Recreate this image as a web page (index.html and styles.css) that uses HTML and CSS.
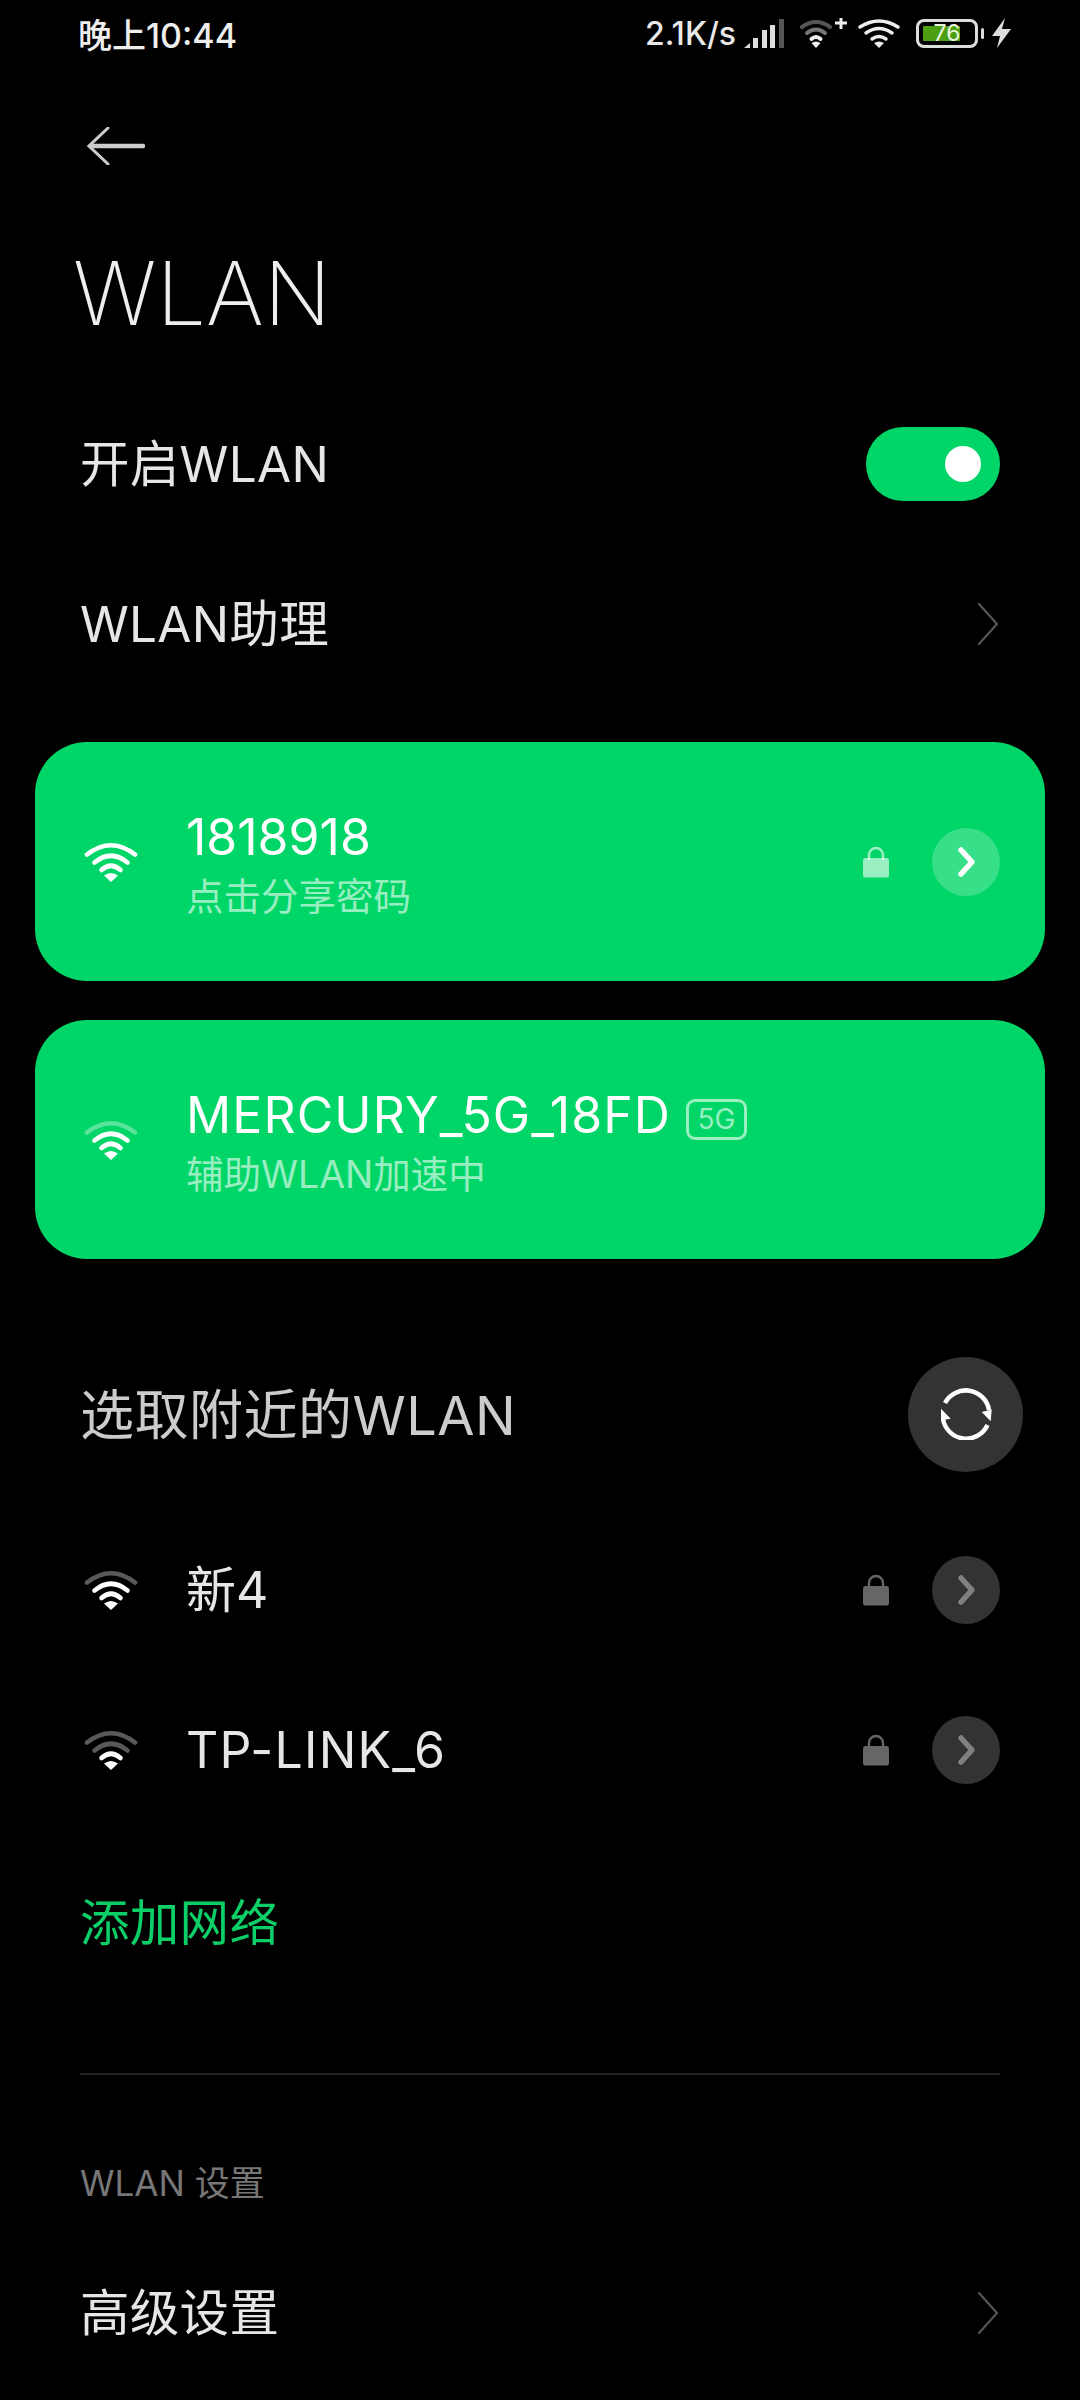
FILE: index.html
```html
<!DOCTYPE html>
<html lang="zh-CN">
<head>
  <meta charset="UTF-8" />
  <meta name="viewport" content="width=device-width, initial-scale=1.0"/>
  <title>WLAN</title>
  <link rel="stylesheet" href="styles.css">
</head>
<body>
  <!-- Icones reutilizados -->
  <svg class="defs" aria-hidden="true">
    <symbol id="arc-outer" viewBox="0 0 54 40"><path d="M3 12.5Q27 -6 51 12.5" fill="none" stroke="currentColor" stroke-width="4.6" stroke-linecap="round"/></symbol>
    <symbol id="arc-middle" viewBox="0 0 54 40"><path d="M10.5 20.5Q27 7 43.500 20.500" fill="none" stroke="currentColor" stroke-width="4.6" stroke-linecap="round"/></symbol>
    <symbol id="arc-inner" viewBox="0 0 54 40"><path d="M17.500 28Q27 19.500 36.500 28" fill="none" stroke="currentColor" stroke-width="4.6" stroke-linecap="round"/></symbol>
    <symbol id="wifi-dot" viewBox="0 0 54 40"><path d="M20 33.500Q27 28.500 34 33.500L27 40Z" fill="currentColor"/></symbol>
    <symbol id="lock" viewBox="0 0 28 32"><path d="M7 14V9a7 7 0 0 1 14 0v5" fill="none" stroke="currentColor" stroke-width="2.400"/><rect x="1" y="12" width="26" height="19.500" rx="2.500" fill="currentColor"/></symbol>
    <symbol id="go" viewBox="0 0 68 68"><path d="M29 22L40 34L29 46" fill="none" stroke="currentColor" stroke-width="5.500" stroke-linecap="round" stroke-linejoin="round"/></symbol>
    <symbol id="more" viewBox="0 0 24 44"><path d="M3 2L21 22L3 42" fill="none" stroke="currentColor" stroke-width="2.200" stroke-linecap="round"/></symbol>
  </svg>

  <div class="status-bar">
    <span class="status-time">晚上10:44</span>
    <div class="status-icons">
      <span class="net-speed">2.1K/s</span>
      <svg class="ic-signal" viewBox="0 0 40 29">
        <path d="M0 29L6 24V29Z" fill="#ddd"/>
        <rect x="9" y="19" width="5" height="10" fill="#ddd"/>
        <rect x="18" y="11" width="5" height="18" fill="#ddd"/>
        <rect x="26" y="6" width="5" height="23" fill="#ddd"/>
        <rect x="35" y="0" width="5" height="29" fill="#555"/>
      </svg>
      <svg class="ic-wifi-plus" viewBox="0 0 47 30">
        <g fill="none" stroke-width="4" stroke-linecap="round">
          <path d="M2 9Q16 -1 30 9" stroke="#555"/>
          <path d="M7 15Q16 8 25 15" stroke="#777"/>
          <path d="M11.500 21Q16 17 20.500 21" stroke="#eee"/>
        </g>
        <path d="M11.500 25Q16 22 20.500 25L16 30Z" fill="#eee"/>
        <path d="M35 5H47M41 0V11" stroke="#eee" stroke-width="3" fill="none"/>
      </svg>
      <svg class="ic-wifi-small" viewBox="0 0 42 30">
        <g fill="none" stroke="#eee" stroke-width="3.400" stroke-linecap="round">
          <path d="M2 9Q21 -3 40 9"/>
          <path d="M8 15Q21 6 34 15"/>
          <path d="M14 21Q21 16 28 21"/>
        </g>
        <path d="M16 25Q21 22 26 25L21 30Z" fill="#eee"/>
      </svg>
      <div class="battery">
        <div class="battery-body">
          <div class="battery-fill"></div>
          <span class="battery-num">76</span>
        </div>
        <span class="battery-nub"></span>
      </div>
      <svg class="ic-bolt" viewBox="0 0 19 30"><path d="M13 0L0 18H8L5 30L19 11H10Z" fill="#ddd"/></svg>
    </div>
  </div>

  <div class="top-bar">
    <svg class="ic-back" viewBox="0 0 58 38">
      <path d="M21 1L2 19L21 37" fill="none" stroke="#ccc" stroke-width="3" stroke-linecap="round"/>
      <path d="M5 19H56" fill="none" stroke="#ccc" stroke-width="4.500" stroke-linecap="round"/>
    </svg>
  </div>

  <h1 class="page-title">WLAN</h1>

  <div class="row">
    <span class="row-label">开启WLAN</span>
    <div class="toggle"><span class="toggle-knob"></span></div>
  </div>
  <div class="row">
    <span class="row-label">WLAN助理</span>
    <svg class="ic-more"><use href="#more"/></svg>
  </div>

  <div class="cards">
    <div class="net net-card">
      <svg class="ic-wifi">
        <use href="#arc-outer"/><use href="#arc-middle"/><use href="#arc-inner"/><use href="#wifi-dot"/>
      </svg>
      <div class="net-text">
        <div class="net-name">1818918</div>
        <div class="net-sub">点击分享密码</div>
      </div>
      <svg class="ic-lock"><use href="#lock"/></svg>
      <svg class="ic-go"><use href="#go"/></svg>
    </div>
    <div class="net net-card">
      <svg class="ic-wifi">
        <use class="arc-dim" href="#arc-outer"/><use href="#arc-middle"/><use href="#arc-inner"/><use href="#wifi-dot"/>
      </svg>
      <div class="net-text">
        <div class="net-name name-wide">MERCURY_5G_18FD<span class="badge-5g">5G</span></div>
        <div class="net-sub">辅助WLAN加速中</div>
      </div>
    </div>
  </div>

  <div class="row section-head">
    <span class="section-label">选取附近的WLAN</span>
    <div class="refresh">
      <svg class="ic-refresh" viewBox="0 0 52 52">
        <g fill="none" stroke="#fff" stroke-width="4.500">
          <path d="M5 15A23.500 23.500 0 0 1 49 22"/>
          <path d="M47.500 37A23.500 23.500 0 0 1 3 31"/>
        </g>
        <path d="M1 20.700L10.700 30.700L1 32.300Z" fill="#fff"/>
        <path d="M41.700 24L51.700 21.600L50.700 33.300Z" fill="#fff"/>
      </svg>
    </div>
  </div>

  <div class="net net-row">
    <svg class="ic-wifi">
      <use class="arc-dim" href="#arc-outer"/><use href="#arc-middle"/><use href="#arc-inner"/><use href="#wifi-dot"/>
    </svg>
    <div class="net-text"><div class="net-name">新4</div></div>
    <svg class="ic-lock"><use href="#lock"/></svg>
    <svg class="ic-go"><use href="#go"/></svg>
  </div>
  <div class="net net-row">
    <svg class="ic-wifi">
      <use class="arc-dim" href="#arc-outer"/><use class="arc-dim" href="#arc-middle"/><use href="#arc-inner"/><use href="#wifi-dot"/>
    </svg>
    <div class="net-text"><div class="net-name name-wide">TP-LINK_6</div></div>
    <svg class="ic-lock"><use href="#lock"/></svg>
    <svg class="ic-go"><use href="#go"/></svg>
  </div>

  <div class="row add-row">
    <span class="row-label add-label">添加网络</span>
  </div>

  <div class="divider"></div>

  <div class="small-head">WLAN 设置</div>

  <div class="row">
    <span class="row-label">高级设置</span>
    <svg class="ic-more"><use href="#more"/></svg>
  </div>
</body>
</html>
```

FILE: styles.css
```css
/* Base */
*, *::before, *::after {
  box-sizing: border-box;
}
body {
  margin: 0;
  height: 2400px;
  overflow: hidden;
  background-color: #000;
  color: #e6e6e6;
  font-family: 'Inter', 'Noto Sans CJK SC', sans-serif;
}
.defs {
  display: none;
}

/* Status bar */
.status-bar {
  height: 66px;
  padding: 0 69px 0 78px;
  display: flex;
  justify-content: space-between;
  align-items: center;
}
.status-time {
  font-size: 34px;
  font-weight: 500;
  color: #eee;
}
.status-icons {
  display: flex;
  align-items: center;
}
.net-speed {
  font-size: 32px;
  font-weight: 500;
  color: #e8e8e8;
  width: 99px;
  white-space: nowrap;
}
.ic-signal {
  width: 40px;
  height: 29px;
}
.ic-wifi-plus {
  width: 47px;
  height: 30px;
  margin-left: 16px;
}
.ic-wifi-small {
  width: 42px;
  height: 30px;
  margin-left: 11px;
}
.battery {
  display: flex;
  align-items: center;
  margin-left: 16px;
}
.battery-body {
  position: relative;
  width: 62px;
  height: 29px;
  border: 3px solid #ddd;
  border-radius: 8px;
  display: flex;
  align-items: center;
  justify-content: center;
}
.battery-fill {
  position: absolute;
  left: 4px;
  top: 4px;
  bottom: 4px;
  width: 37px;
  background-color: #4d9f12;
  border-radius: 1px;
}
.battery-num {
  position: relative;
  font-size: 23px;
  color: #e9f5df;
}
.battery-nub {
  width: 3px;
  height: 11px;
  margin-left: 3px;
  border-radius: 2px;
  background-color: #ddd;
}
.ic-bolt {
  width: 19px;
  height: 30px;
  margin-left: 8px;
}

/* Header */
.top-bar {
  height: 160px;
  padding-left: 87px;
  display: flex;
  align-items: center;
}
.ic-back {
  width: 58px;
  height: 38px;
}
.page-title {
  margin: 0;
  height: 158px;
  padding: 14px 0 0 73px;
  font-size: 88px;
  line-height: 106px;
  font-weight: 200;
  color: #eee;
}

/* Rows */
.row {
  height: 160px;
  padding: 0 80px;
  display: flex;
  align-items: center;
  justify-content: space-between;
}
.row-label {
  padding-bottom: 7px;
  font-size: 49.500px;
  letter-spacing: 0.3px;
  color: #e6e6e6;
}
.toggle {
  width: 134px;
  height: 74px;
  padding-right: 19px;
  border-radius: 37px;
  background-color: #00d668;
  display: flex;
  align-items: center;
  justify-content: flex-end;
}
.toggle-knob {
  width: 36px;
  height: 36px;
  border-radius: 50%;
  background-color: #fff;
}
.ic-more {
  width: 24px;
  height: 44px;
  color: #555;
}

/* Redes */
.cards {
  margin: 38px 35px 0;
  display: flex;
  flex-direction: column;
  gap: 39px;
}
.net {
  display: flex;
  align-items: center;
}
.net-card {
  height: 239px;
  padding: 0 45px 0 49px;
  border-radius: 52px;
  background-color: #00d668;
  color: #fff;
}
.net-row {
  height: 160px;
  padding: 0 80px 0 84px;
  color: #fff;
}
.ic-wifi {
  width: 54px;
  height: 40px;
  flex: none;
}
.ic-wifi use {
  width: 54px;
  height: 40px;
}
.arc-dim {
  opacity: 0.35;
}
.net-text {
  flex: 1;
  margin-left: 48px;
  padding-top: 5px;
}
.net-name {
  font-size: 50px;
  line-height: 62px;
  color: #fff;
}
.name-wide {
  letter-spacing: 1.100px;
}
.net-row .name-wide {
  letter-spacing: 1.200px;
}
.net-row .net-name {
  color: #e6e6e6;
}
.net-row .net-text {
  padding-top: 0;
}
.net-sub {
  margin-top: 4px;
  font-size: 37.500px;
  line-height: 50px;
  color: rgba(255, 255, 255, 0.6);
}
.badge-5g {
  display: inline-block;
  width: 61px;
  height: 41px;
  margin-left: 15px;
  border: 3px solid rgba(255, 255, 255, 0.6);
  border-radius: 9px;
  font-size: 28px;
  line-height: 35px;
  letter-spacing: 0;
  text-align: center;
  vertical-align: 4px;
  color: rgba(255, 255, 255, 0.6);
}
.ic-lock {
  width: 28px;
  height: 32px;
  color: rgba(255, 255, 255, 0.6);
}
.ic-go {
  width: 68px;
  height: 68px;
  margin-left: 42px;
  border-radius: 50%;
  background-color: rgba(255, 255, 255, 0.22);
  color: #fff;
}
.net-row .ic-lock {
  color: #666;
}
.net-row .ic-go {
  background-color: #333;
  color: #808080;
}

/* Secao de redes proximas */
.section-head {
  margin-top: 75px;
  padding-right: 57px;
  margin-bottom: 16px;
}
.section-label {
  padding-bottom: 5px;
  font-size: 54px;
  letter-spacing: 0.5px;
  color: #ccc;
}
.refresh {
  width: 115px;
  height: 115px;
  border-radius: 50%;
  background-color: #333;
  display: flex;
  align-items: center;
  justify-content: center;
}
.ic-refresh {
  width: 52px;
  height: 52px;
}
.add-row {
  margin-top: 12px;
}
.add-label {
  padding-bottom: 5px;
  color: #0ccf68;
}
.divider {
  height: 2px;
  margin: 71px 80px 0;
  background-color: #222;
}
.small-head {
  height: 158px;
  padding: 0 0 0 80px;
  font-size: 35px;
  line-height: 216px;
  color: #777;
}
```
